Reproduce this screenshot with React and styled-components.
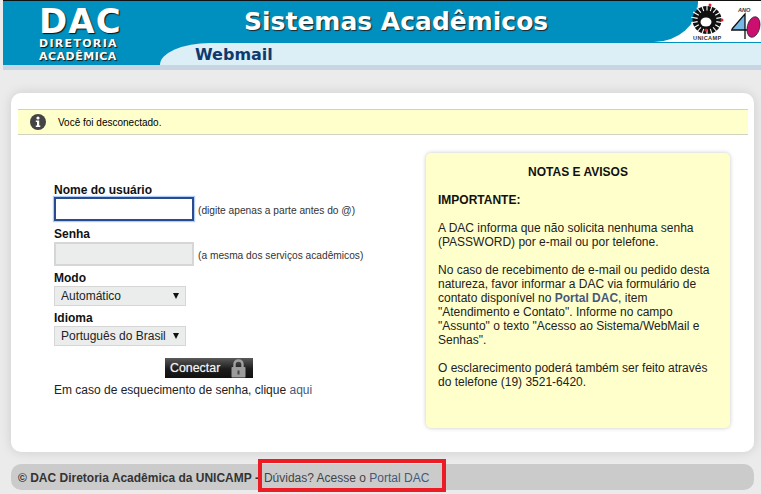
import React from "react";
import styled, { createGlobalStyle } from "styled-components";

const Global = createGlobalStyle`
  html, body { margin: 0; padding: 0; background: #ebebeb; height: 494px; overflow: hidden; }
  body { font-family: "Liberation Sans", Arial, sans-serif; font-size: 12px; color: #111; }
`;

const Page = styled.div`
  width: 761px;
  height: 494px;
  display: flex;
  flex-direction: column;
  overflow: hidden;
`;

const Header = styled.header`
  display: flex;
  height: 64px;
  margin: 1px 0 0 3px;
  background: #0090bf;
  box-shadow: 0 -1px 0 #111;
`;

const Brand = styled.div`
  width: 157px;
  flex: none;
  padding: 5px 0 0 36px;
  box-sizing: border-box;
  display: flex;
  flex-direction: column;
  color: #fff;
  font-family: "DejaVu Sans", Verdana, sans-serif;
  font-weight: 700;
  text-shadow: 1px 1px 1px #111;
`;

const BrandBig = styled.div`
  font-size: 34px;
  line-height: 31px;
  height: 31px;
  letter-spacing: 1.1px;
`;

const BrandSmall = styled.div`
  font-size: 11px;
  line-height: 13px;
  letter-spacing: ${(p) => p.$track}px;
  white-space: nowrap;
`;

const HeaderMain = styled.div`
  flex: 1;
  display: flex;
  flex-direction: column;
`;

const TitleRow = styled.div`
  height: 41px;
  flex: none;
  display: flex;
  background: #fff;
  border-bottom: 1px solid #0090bf;
`;

const TitleBand = styled.div`
  flex: 1;
  background: #0090bf;
  border-bottom-right-radius: 44px 39px;
  padding-left: 84px;
  box-sizing: border-box;
`;

const Title = styled.h1`
  margin: 0;
  font: 700 25px/41px "DejaVu Sans", Verdana, sans-serif;
  color: #fff;
  text-shadow: 1px 1px 1px #222;
  white-space: nowrap;
`;

const LogoBlock = styled.div`
  width: 71px;
  margin-left: -8px;
  flex: none;
  position: relative;
  display: flex;
`;

const Tab = styled.div`
  flex: 1;
  background: #dceef6;
  border-top-left-radius: 50px 22px;
  padding-left: 35px;
  font: 700 16px/24px "DejaVu Sans", Verdana, sans-serif;
  color: #0f3a6e;
`;

const Strip = styled.div`
  height: 5px;
  margin-left: 3px;
  background: #c8d5e3;
  flex: none;
`;

const Content = styled.main`
  flex: 1;
  display: flex;
  flex-direction: column;
  padding: 23px 7px 0 11px;
`;

const Card = styled.section`
  height: 359px;
  flex: none;
  background: #fff;
  border-radius: 10px;
  box-shadow: 0 0 12px rgba(0, 0, 0, 0.13);
  padding-top: 16px;
  box-sizing: border-box;
  display: flex;
  flex-direction: column;
`;

const Notice = styled.div`
  margin: 0 6px 0 7px;
  height: 26px;
  box-sizing: border-box;
  display: flex;
  align-items: center;
  gap: 12px;
  padding-left: 12px;
  background: #ffffcc;
  border-top: 1px solid #d2d2c0;
  border-bottom: 1px solid #d2d2c0;
  font-size: 10px;
  color: #000;
`;

const Columns = styled.div`
  display: flex;
  justify-content: space-between;
  padding: 18px 24px 0 43px;
`;

const Form = styled.form`
  width: 330px;
  padding-top: 30px;
  display: flex;
  flex-direction: column;
`;

const Label = styled.label`
  font-size: 12px;
  font-weight: 700;
  line-height: 14px;
  height: 14px;
  color: #111;
  margin-top: ${(p) => p.$gap || 0}px;
  margin-bottom: ${(p) => p.$after || 0}px;
`;

const Row = styled.div`
  display: flex;
  align-items: center;
  gap: 4px;
`;

const Input = styled.input`
  width: 140px;
  height: 24px;
  box-sizing: border-box;
  margin: 0;
  padding: 0 4px;
  border: ${(p) => (p.$focus ? "2px solid #2b4c8c" : "2px solid #d6d6d6")};
  background: ${(p) => (p.$focus ? "#fff" : "#ebeded")};
  box-shadow: ${(p) => (p.$focus ? "0 0 1px 1px rgba(110,160,240,.55)" : "none")};
  outline: none;
`;

const Hint = styled.span`
  font-size: 10.2px;
  color: #333;
  white-space: nowrap;
  position: relative;
  top: 1px;
`;

const SelectWrap = styled.div`
  position: relative;
  width: 132px;
  height: 20px;
  &::after {
    content: "";
    position: absolute;
    right: 7px;
    top: 7px;
    border-left: 3.5px solid transparent;
    border-right: 3.5px solid transparent;
    border-top: 6px solid #111;
  }
`;

const Select = styled.select`
  appearance: none;
  width: 100%;
  height: 100%;
  margin: 0;
  box-sizing: border-box;
  border: 1px solid #d6d6d6;
  border-radius: 0;
  background: #ebeded;
  padding: 0 0 0 6px;
  font: 12px "Liberation Sans", Arial, sans-serif;
  color: #222;
  outline: none;
`;

const Submit = styled.button`
  align-self: flex-start;
  margin: 12px 0 0 111px;
  width: 88px;
  height: 20px;
  padding: 0 7px 0 5px;
  border: none;
  background: linear-gradient(#5a5a5a, #1c1c1c 55%, #111);
  color: #f2f2f2;
  font: 400 12.4px "Liberation Sans", Arial, sans-serif;
  text-shadow: 0 0 1px rgba(255, 255, 255, 0.6);
  display: flex;
  align-items: center;
  justify-content: space-between;
`;

const Recover = styled.p`
  margin: 5px 0 0;
  font-size: 12px;
  line-height: 14px;
  color: #222;
  white-space: nowrap;
`;

const Link = styled.a`
  color: #45597a;
  text-decoration: none;
`;

const Notes = styled.aside`
  width: 304px;
  height: 275px;
  flex: none;
  box-sizing: border-box;
  padding: 12px 12px 0;
  background: #ffffcc;
  border-radius: 5px;
  box-shadow: 0 0 4px rgba(0, 0, 0, 0.22);
  font-size: 12px;
  line-height: 14px;
  color: #222;
`;

const NotesTitle = styled.h2`
  margin: 0 0 14px;
  font-size: 12px;
  line-height: 14px;
  font-weight: 700;
  text-align: center;
  color: #111;
`;

const NotesHead = styled.h3`
  margin: 0 0 14px;
  font-size: 12px;
  line-height: 14px;
  font-weight: 700;
  color: #111;
`;

const NotesText = styled.p`
  margin: 0 0 14px;
`;

const Footer = styled.footer`
  position: relative;
  height: 26px;
  margin-top: 12px;
  flex: none;
  background: #cbcbcb;
  border-radius: 10px;
  display: flex;
  align-items: center;
  padding: 1px 0 0 7px;
  box-sizing: border-box;
  font-size: 12px;
  color: #444;
  white-space: nowrap;
`;

const FooterStrong = styled.strong`
  color: #333;
  margin-right: 5px;
`;

const Highlight = styled.div`
  position: absolute;
  left: 247px;
  top: -5px;
  width: 188px;
  height: 33px;
  box-sizing: border-box;
  border: 4px solid #ed1c24;
  pointer-events: none;
`;

const InfoIcon = () => (
  <svg width="16" height="16" viewBox="0 0 16 16" aria-hidden="true">
    <circle cx="8" cy="8" r="8" fill="#444" />
    <circle cx="8" cy="4" r="1.6" fill="#fff" />
    <path d="M5.8 6.6H9.2V11.4H10.3V12.9H5.8V11.4H7V8.1H5.8Z" fill="#fff" />
  </svg>
);

const LockIcon = () => (
  <svg width="15" height="19" viewBox="0 0 15 19" aria-hidden="true">
    <path d="M3.5 9V5.2C3.5 2.8 5.2 1.5 7.5 1.5S11.5 2.8 11.5 5.2V9" fill="none" stroke="#a0a0a0" strokeWidth="2.4" />
    <rect x="0.5" y="8" width="14" height="10.5" rx="0.8" fill="#9c9c9c" />
    <rect x="6.5" y="11.5" width="2" height="4" fill="#444" />
  </svg>
);

const spokes = Array.from({ length: 18 }, (_, i) => (i * 360) / 18);

const UnicampLogo = () => (
  <svg width="71" height="41" viewBox="0 0 71 41" aria-hidden="true">
    <ellipse cx="17" cy="19" rx="14.5" ry="14" fill="#111" />
    {spokes.map((a) => (
      <line
        key={a}
        x1="17"
        y1="9.5"
        x2="17"
        y2="3"
        stroke="#fff"
        strokeWidth="1.1"
        transform={`rotate(${a} 17 19)`}
      />
    ))}
    <ellipse cx="16" cy="21" rx="5.5" ry="4.5" fill="#fff" />
    <circle cx="20" cy="4" r="1.5" fill="#e0222b" />
    <circle cx="32" cy="19" r="1.5" fill="#e0222b" />
    <circle cx="16" cy="29" r="1.5" fill="#e0222b" />
    <text x="3" y="39" fontFamily="Liberation Sans, sans-serif" fontWeight="700" fontSize="5.6" letterSpacing="0.35" fill="#333">UNICAMP</text>
    <text x="48" y="11" fontFamily="Liberation Sans, sans-serif" fontStyle="italic" fontWeight="700" fontSize="5.6" fill="#334">ANO</text>
    <path d="M42 28L55 14V29H42Z" fill="#74b8e8" />
    <path d="M41 29H58M42 28L55 13V38" fill="none" stroke="#111" strokeWidth="1.3" />
    <ellipse cx="63.5" cy="26" rx="6.2" ry="10.5" transform="rotate(14 63.5 26)" fill="#cc0f6e" stroke="#223" strokeWidth="0.7" />
  </svg>
);

export default function App() {
  return (
    <Page>
      <Global />
      <Header>
        <Brand>
          <BrandBig>DAC</BrandBig>
          <BrandSmall $track={1.3}>DIRETORIA</BrandSmall>
          <BrandSmall $track={0.5}>ACADÊMICA</BrandSmall>
        </Brand>
        <HeaderMain>
          <TitleRow>
            <TitleBand>
              <Title>Sistemas Acadêmicos</Title>
            </TitleBand>
            <LogoBlock>
              <UnicampLogo />
            </LogoBlock>
          </TitleRow>
          <Tab>Webmail</Tab>
        </HeaderMain>
      </Header>
      <Strip />
      <Content>
        <Card>
          <Notice>
            <InfoIcon />
            Você foi desconectado.
          </Notice>
          <Columns>
            <Form onSubmit={(e) => e.preventDefault()}>
              <Label>Nome do usuário</Label>
              <Row>
                <Input $focus type="text" />
                <Hint>(digite apenas a parte antes do @)</Hint>
              </Row>
              <Label $gap={6} $after={1}>Senha</Label>
              <Row>
                <Input type="password" />
                <Hint>(a mesma dos serviços acadêmicos)</Hint>
              </Row>
              <Label $gap={5} $after={1}>Modo</Label>
              <SelectWrap>
                <Select defaultValue="auto">
                  <option value="auto">Automático</option>
                </Select>
              </SelectWrap>
              <Label $gap={5} $after={1}>Idioma</Label>
              <SelectWrap>
                <Select defaultValue="pt">
                  <option value="pt">Português do Brasil</option>
                </Select>
              </SelectWrap>
              <Submit type="submit">
                Conectar
                <LockIcon />
              </Submit>
              <Recover>
                Em caso de esquecimento de senha, clique <Link href="#">aqui</Link>
              </Recover>
            </Form>
            <Notes>
              <NotesTitle>NOTAS E AVISOS</NotesTitle>
              <NotesHead>IMPORTANTE:</NotesHead>
              <NotesText>
                A DAC informa que não solicita nenhuma senha
                <br />
                (PASSWORD) por e-mail ou por telefone.
              </NotesText>
              <NotesText>
                No caso de recebimento de e-mail ou pedido desta
                <br />
                natureza, favor informar a DAC via formulário de
                <br />
                contato disponível no <Link as="b">Portal DAC</Link>, item
                <br />
                "Atendimento e Contato". Informe no campo
                <br />
                "Assunto" o texto "Acesso ao Sistema/WebMail e
                <br />
                Senhas".
              </NotesText>
              <NotesText>
                O esclarecimento poderá também ser feito através
                <br />
                do telefone (19) 3521-6420.
              </NotesText>
            </Notes>
          </Columns>
        </Card>
        <Footer>
          <FooterStrong>© DAC Diretoria Acadêmica da UNICAMP -</FooterStrong>
          Dúvidas? Acesse o&nbsp;<Link href="#">Portal DAC</Link>
          <Highlight />
        </Footer>
      </Content>
    </Page>
  );
}
